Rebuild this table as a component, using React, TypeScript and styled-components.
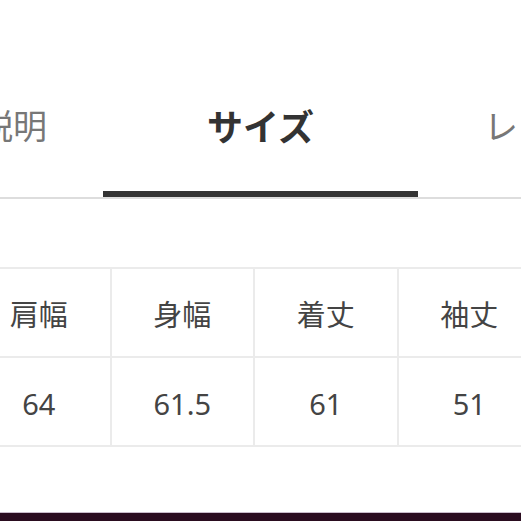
import React, { FC } from "react";
import styled, { createGlobalStyle } from "styled-components";

const GlobalStyle = createGlobalStyle`
  html, body {
    margin: 0;
    padding: 0;
    background: #fff;
  }
  body {
    font-family: "Noto Sans CJK JP", "Noto Sans", sans-serif;
  }
`;

type TabItem = {
  label: string;
  width: number;
  active?: boolean;
};

const tabs: TabItem[] = [
  { label: "商品説明", width: 248 },
  { label: "サイズ", width: 315, active: true },
  { label: "レビュー", width: 268 },
];

const headers = ["肩幅", "身幅", "着丈", "袖丈"];
const values = ["64", "61.5", "61", "51"];

const App: FC = () => {
  return (
    <Page>
      <GlobalStyle />
      <TabBar>
        <TabRow>
          {tabs.map((tab) => (
            <Tab key={tab.label} $width={tab.width} $active={tab.active}>
              <span>{tab.label}</span>
            </Tab>
          ))}
        </TabRow>
      </TabBar>

      <SizeTable>
        {headers.map((h) => (
          <Cell key={h}>{h}</Cell>
        ))}
        {values.map((v, idx) => (
          <Cell key={idx} $number>
            {v}
          </Cell>
        ))}
      </SizeTable>

      <BottomBar />
    </Page>
  );
};

const Page = styled.div`
  height: 521px;
  width: 521px;
  overflow: hidden;
  display: flex;
  flex-direction: column;
  padding-top: 80px;
  box-sizing: border-box;
`;

const TabBar = styled.div`
  height: 117px;
  border-bottom: 2px solid #dddddd;
  overflow: hidden;
`;

const TabRow = styled.div`
  display: flex;
  margin-left: -145px;
  height: 100%;
`;

const Tab = styled.div<{ $width: number; $active?: boolean }>`
  position: relative;
  flex: 0 0 ${(p) => p.$width}px;
  display: flex;
  justify-content: center;
  span {
    margin-top: 25px;
    line-height: 40px;
    font-size: ${(p) => (p.$active ? "36px" : "34px")};
    font-weight: ${(p) => (p.$active ? 700 : 400)};
    color: ${(p) => (p.$active ? "#333333" : "#777777")};
    white-space: nowrap;
  }
  &::after {
    content: "";
    display: ${(p) => (p.$active ? "block" : "none")};
    position: absolute;
    left: 0;
    right: 0;
    bottom: 0;
    height: 6px;
    background: #333333;
  }
`;

const SizeTable = styled.div`
  margin-top: 68px;
  margin-left: -32px;
  display: grid;
  grid-template-columns: repeat(4, 143.5px);
  grid-auto-rows: 89px;
  border-top: 2px solid #ebebeb;
  width: max-content;
`;

const Cell = styled.div<{ $number?: boolean }>`
  display: flex;
  align-items: center;
  justify-content: center;
  border-right: 2px solid #ebebeb;
  border-bottom: 2px solid #ebebeb;
  font-size: 29px;
  color: #444444;
  font-family: ${(p) =>
    p.$number ? `"Noto Sans", sans-serif` : `"Noto Sans CJK JP", sans-serif`};
  padding-top: ${(p) => (p.$number ? "3px" : "0")};
`;

const BottomBar = styled.div`
  margin-top: auto;
  height: 8px;
  background: #2a0c1f;
  border-top: 1px solid #c9bccb;
`;

export default App;
